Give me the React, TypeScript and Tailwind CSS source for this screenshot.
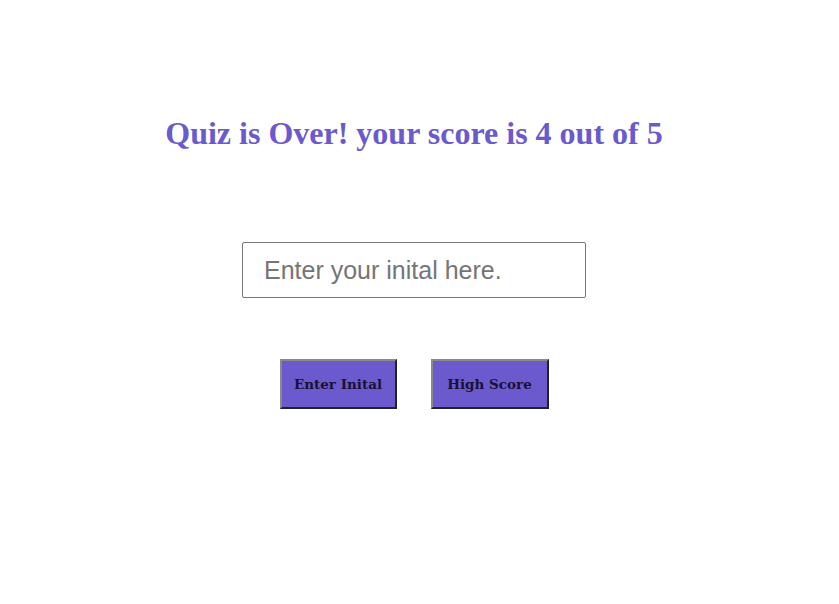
export default function App() {
  return (
    <div className="min-h-[604px] w-full bg-white pr-[11px]">
      <div className="flex flex-col items-center">
        <h1 className="mt-[113px] text-[32px] font-bold leading-[40px] text-[#6a5acd] [font-family:'Liberation_Serif',serif]">
          Quiz is Over! your score is 4 out of 5
        </h1>
        <input
          type="text"
          placeholder="Enter your inital here."
          className="mt-[89px] h-[56px] w-[344px] rounded-[2px] border border-[#767676] px-[21px] text-[25px] text-black placeholder:text-[#757575] outline-none [font-family:'Liberation_Sans',sans-serif]"
        />
        <div className="mt-[61px] flex gap-[34px]">
          <button className="h-[50px] w-[117px] border-2 border-t-[#8a8a8a] border-l-[#8a8a8a] border-r-[#222] border-b-[#222] bg-[#6a5acd] text-[13.5px] font-bold text-[#1a1033] [font-family:'DejaVu_Serif',serif]">
            Enter Inital
          </button>
          <button className="h-[50px] w-[118px] border-2 border-t-[#8a8a8a] border-l-[#8a8a8a] border-r-[#222] border-b-[#222] bg-[#6a5acd] text-[13.5px] font-bold text-[#1a1033] [font-family:'DejaVu_Serif',serif]">
            High Score
          </button>
        </div>
      </div>
    </div>
  )
}
